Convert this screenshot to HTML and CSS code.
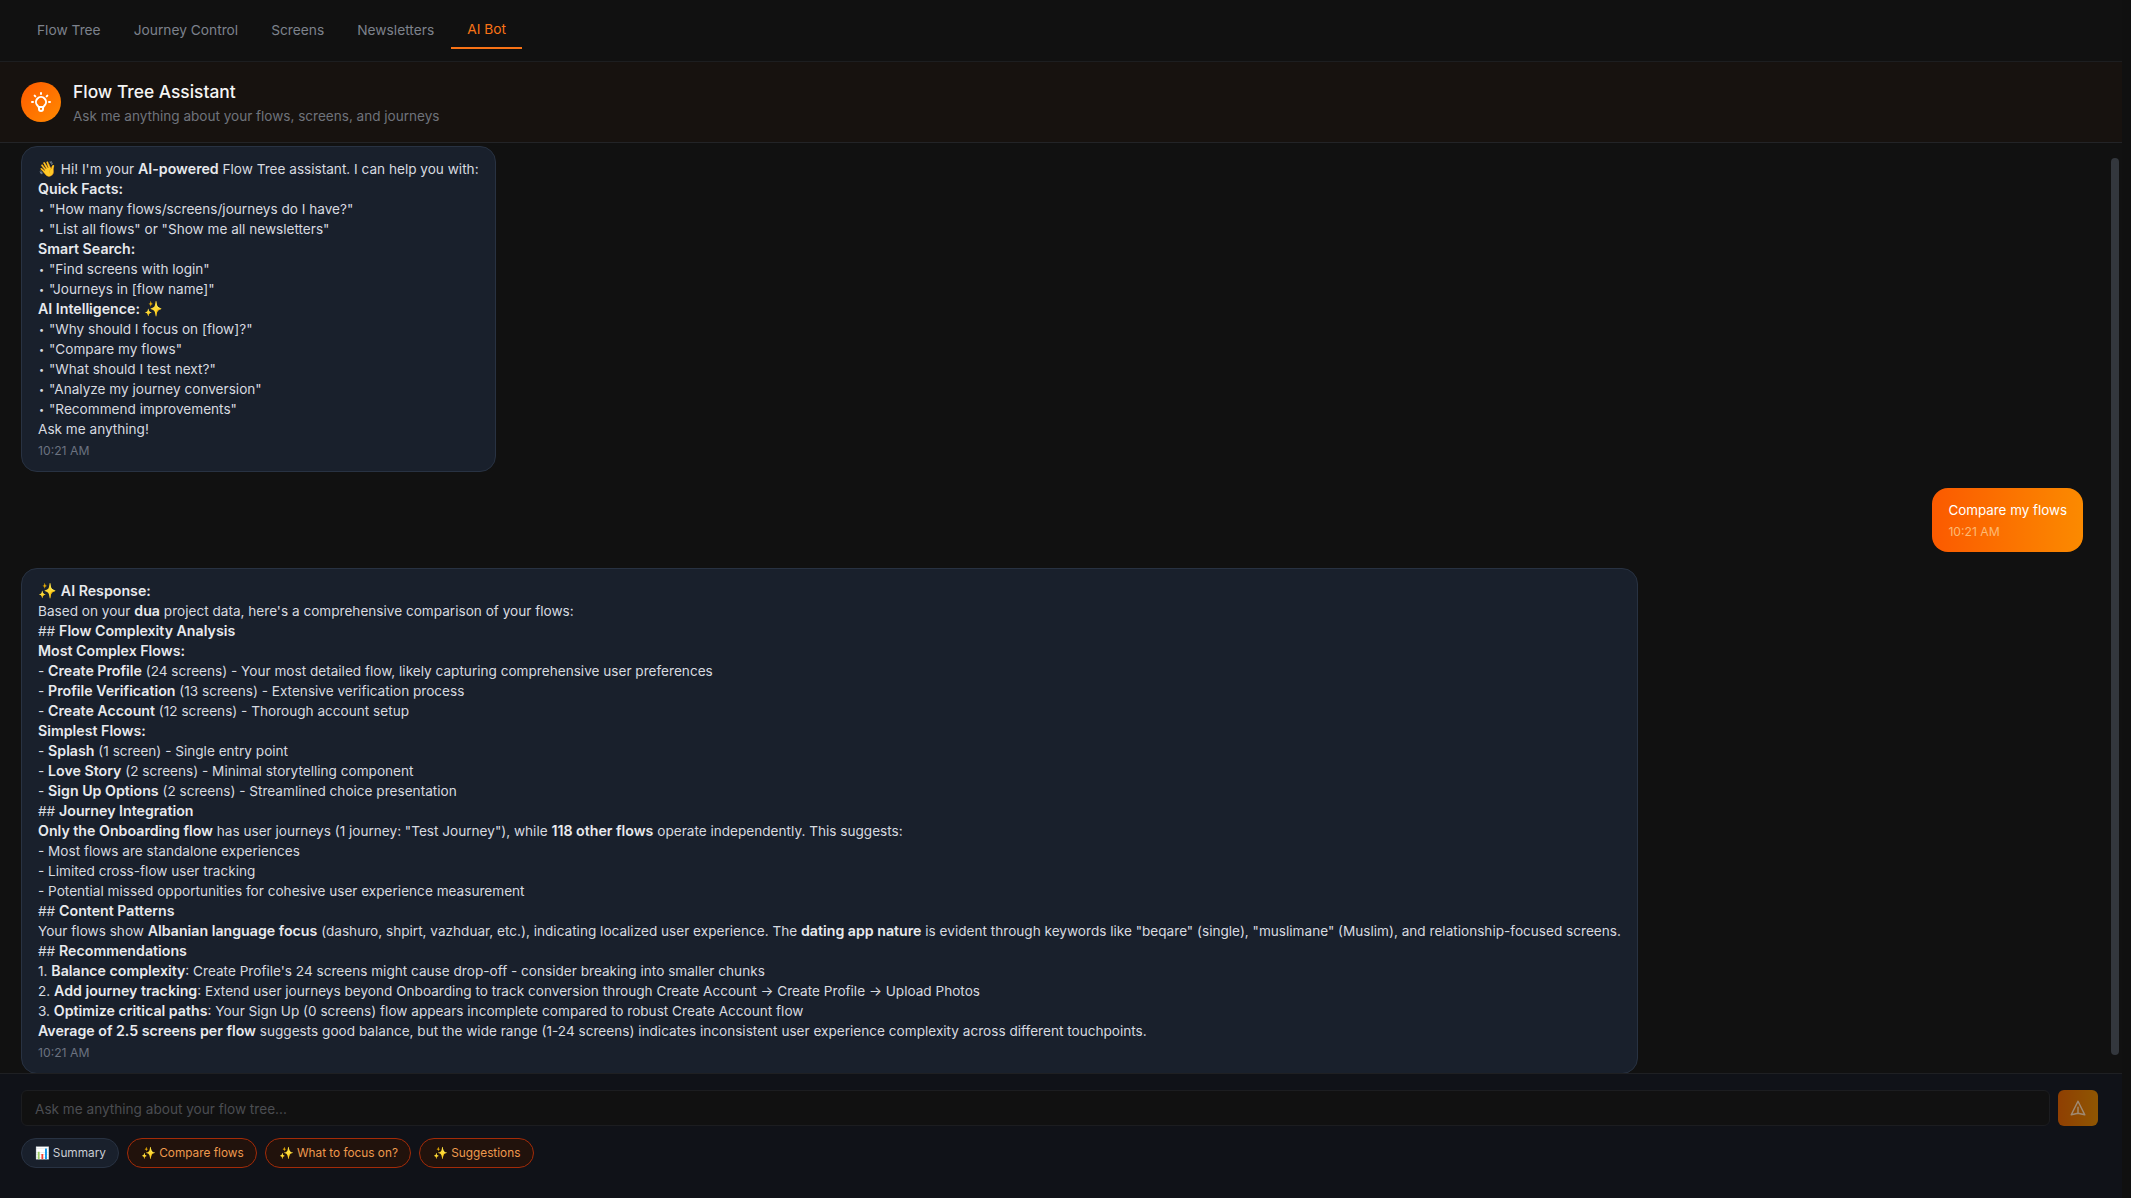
FILE: index.html
```html
<!DOCTYPE html>
<html lang="en">
<head>
    <meta charset="UTF-8">
    <meta name="viewport" content="width=device-width, initial-scale=1.0">
    <title>Flow Tree Assistant</title>
    <link rel="stylesheet" href="styles.css">
</head>
<body>
    <div class="app">
        <nav class="tabs">
            <a href="#">Flow Tree</a>
            <a href="#">Journey Control</a>
            <a href="#">Screens</a>
            <a href="#">Newsletters</a>
            <a href="#" class="active">AI Bot</a>
        </nav>

        <header class="chat-header">
            <div class="avatar">
                <svg width="24" height="24" viewBox="0 0 24 24" fill="none" stroke="currentColor" stroke-width="2" stroke-linecap="round" stroke-linejoin="round">
                    <path d="M9.663 17h4.673M12 3v1m6.364 1.636l-.707.707M21 12h-1M4 12H3m3.343-5.657l-.707-.707m2.828 9.9a5 5 0 117.072 0l-.548.547A3.374 3.374 0 0014 18.469V19a2 2 0 11-4 0v-.531c0-.895-.356-1.754-.988-2.386l-.548-.547z"/>
                </svg>
            </div>
            <div>
                <h1>Flow Tree Assistant</h1>
                <p>Ask me anything about your flows, screens, and journeys</p>
            </div>
        </header>

        <main class="messages">
            <div class="thumb"></div>

            <div class="bubble bot">
                <div><span class="emoji">👋</span> Hi! I'm your <b>AI-powered</b> Flow Tree assistant. I can help you with:</div>
                <div><b>Quick Facts:</b></div>
                <div><span class="dot">•</span>"How many flows/screens/journeys do I have?"</div>
                <div><span class="dot">•</span>"List all flows" or "Show me all newsletters"</div>
                <div><b>Smart Search:</b></div>
                <div><span class="dot">•</span>"Find screens with login"</div>
                <div><span class="dot">•</span>"Journeys in [flow name]"</div>
                <div><b>AI Intelligence:</b> <span class="emoji">✨</span></div>
                <div><span class="dot">•</span>"Why should I focus on [flow]?"</div>
                <div><span class="dot">•</span>"Compare my flows"</div>
                <div><span class="dot">•</span>"What should I test next?"</div>
                <div><span class="dot">•</span>"Analyze my journey conversion"</div>
                <div><span class="dot">•</span>"Recommend improvements"</div>
                <div>Ask me anything!</div>
                <time>10:21 AM</time>
            </div>

            <div class="bubble user">
                <div>Compare my flows</div>
                <time>10:21 AM</time>
            </div>

            <div class="bubble bot">
                <div><span class="emoji">✨</span> <b>AI Response:</b></div>
                <div>Based on your <b>dua</b> project data, here's a comprehensive comparison of your flows:</div>
                <div>## <b>Flow Complexity Analysis</b></div>
                <div><b>Most Complex Flows:</b></div>
                <div>- <b>Create Profile</b> (24 screens) - Your most detailed flow, likely capturing comprehensive user preferences</div>
                <div>- <b>Profile Verification</b> (13 screens) - Extensive verification process</div>
                <div>- <b>Create Account</b> (12 screens) - Thorough account setup</div>
                <div><b>Simplest Flows:</b></div>
                <div>- <b>Splash</b> (1 screen) - Single entry point</div>
                <div>- <b>Love Story</b> (2 screens) - Minimal storytelling component</div>
                <div>- <b>Sign Up Options</b> (2 screens) - Streamlined choice presentation</div>
                <div>## <b>Journey Integration</b></div>
                <div><b>Only the Onboarding flow</b> has user journeys (1 journey: "Test Journey"), while <b>118 other flows</b> operate independently. This suggests:</div>
                <div>- Most flows are standalone experiences</div>
                <div>- Limited cross-flow user tracking</div>
                <div>- Potential missed opportunities for cohesive user experience measurement</div>
                <div>## <b>Content Patterns</b></div>
                <div>Your flows show <b>Albanian language focus</b> (dashuro, shpirt, vazhduar, etc.), indicating localized user experience. The <b>dating app nature</b> is evident through keywords like "beqare" (single), "muslimane" (Muslim), and relationship-focused screens.</div>
                <div>## <b>Recommendations</b></div>
                <div>1. <b>Balance complexity</b>: Create Profile's 24 screens might cause drop-off - consider breaking into smaller chunks</div>
                <div>2. <b>Add journey tracking</b>: Extend user journeys beyond Onboarding to track conversion through Create Account → Create Profile → Upload Photos</div>
                <div>3. <b>Optimize critical paths</b>: Your Sign Up (0 screens) flow appears incomplete compared to robust Create Account flow</div>
                <div><b>Average of 2.5 screens per flow</b> suggests good balance, but the wide range (1-24 screens) indicates inconsistent user experience complexity across different touchpoints.</div>
                <time>10:21 AM</time>
            </div>
        </main>

        <footer class="composer">
            <div class="input-row">
                <input type="text" placeholder="Ask me anything about your flow tree...">
                <button class="send" type="button">
                    <svg width="18" height="18" viewBox="0 0 24 24" fill="none" stroke="currentColor" stroke-width="2" stroke-linejoin="round" stroke-linecap="round">
                        <path d="M12 19l9 2-9-18-9 18 9-2zm0 0v-8"/>
                    </svg>
                </button>
            </div>
            <div class="chips">
                <button class="chip" type="button">📊 Summary</button>
                <button class="chip ai" type="button">✨ Compare flows</button>
                <button class="chip ai" type="button">✨ What to focus on?</button>
                <button class="chip ai" type="button">✨ Suggestions</button>
            </div>
        </footer>
    </div>
</body>
</html>
```

FILE: styles.css
```css
* {
    margin: 0;
    padding: 0;
    box-sizing: border-box;
}

body {
    font-family: 'Inter', 'Noto Sans', sans-serif;
    background-color: #101010;
    color: #d8dbe0;
    font-size: 13.6px;
    line-height: 20px;
    height: 100vh;
    overflow: hidden;
}

.app {
    width: 2122px;
    height: 1198px;
    display: flex;
    flex-direction: column;
    background-color: #111111;
}

.tabs {
    display: flex;
    gap: 1px;
    height: 62px;
    padding: 0 21px;
    align-items: flex-start;
    border-bottom: 1px solid #1d1e20;
}

.tabs a {
    color: #7d828c;
    font-size: 13.75px;
    text-decoration: none;
    padding: 20px 16px 0;
    height: 49px;
}

.tabs a.active {
    color: #f97316;
    border-bottom: 2px solid #f97316;
    padding-top: 19px;
    height: 49px;
}

.chat-header {
    height: 81px;
    display: flex;
    align-items: center;
    gap: 12px;
    padding: 0 21px;
    background-color: #17120f;
    border-bottom: 1px solid #232427;
}

.avatar {
    width: 40px;
    height: 40px;
    border-radius: 50%;
    background: linear-gradient(135deg, #ff5a00, #ff8a00);
    color: white;
    display: flex;
    align-items: center;
    justify-content: center;
}

.chat-header h1 {
    font-size: 17.4px;
    line-height: 28px;
    font-weight: 500;
    color: #f5f5f5;
}

.chat-header p {
    font-size: 13.55px;
    color: #6f737b;
}

.messages {
    position: relative;
    flex: 1;
    overflow: hidden;
    padding: 3px 20px 0 21px;
    display: flex;
    flex-direction: column;
    gap: 16px;
}

.thumb {
    position: absolute;
    top: 15px;
    right: 3px;
    width: 8px;
    height: 897px;
    background-color: #33373d;
    border-radius: 4px;
}

.bubble {
    padding: 12px 16px;
    border-radius: 16px;
    width: fit-content;
    flex-shrink: 0;
}

.bubble.bot {
    background-color: #19202c;
    border: 1px solid #283242;
}

.bubble.bot b {
    font-size: 14.2px;
    color: #e8eaee;
    font-weight: 600;
}

.emoji {
    font-size: 15px;
    line-height: 1;
}

.dot {
    display: inline-block;
    width: 7px;
    margin-right: 4px;
    text-align: center;
    font-size: 9px;
    line-height: 1;
    vertical-align: 1px;
}

.bubble.user {
    align-self: flex-end;
    margin-right: 19px;
    font-size: 13.4px;
    color: #fff;
    background: linear-gradient(90deg, #fb5a00, #fb8a00);
}

time {
    display: block;
    margin-top: 4px;
    font-size: 12.2px;
    line-height: 16px;
    color: #6b7280;
}

.bubble.user time {
    color: #fdba74;
}

.composer {
    height: 125px;
    padding: 16px 24px 0 21px;
    background-color: #101218;
    border-top: 1px solid #1f2023;
}

.input-row {
    display: flex;
    gap: 8px;
}

.input-row input {
    flex: 1;
    height: 36px;
    padding: 1px 13px 0;
    font-family: inherit;
    font-size: 13.6px;
    color: #e5e7eb;
    background-color: #111111;
    border: 1px solid #1c1d20;
    border-radius: 6px;
}

.input-row input::placeholder {
    color: #4b4d52;
}

.send {
    width: 40px;
    height: 36px;
    border: none;
    border-radius: 6px;
    color: #a08a72;
    background: linear-gradient(90deg, #8f3f02, #8f5602);
    display: flex;
    align-items: center;
    justify-content: center;
}

.chips {
    display: flex;
    gap: 8px;
    margin-top: 12px;
}

.chip {
    font-family: inherit;
    font-size: 11.8px;
    line-height: 16px;
    height: 30px;
    padding: 0 12.5px;
    border-radius: 15px;
    color: #c9cdd4;
    background-color: #19202c;
    border: 1px solid #283242;
}

.chip.ai {
    color: #ee9a4e;
    background-color: #21120c;
    border-color: #a32b08;
}
```
